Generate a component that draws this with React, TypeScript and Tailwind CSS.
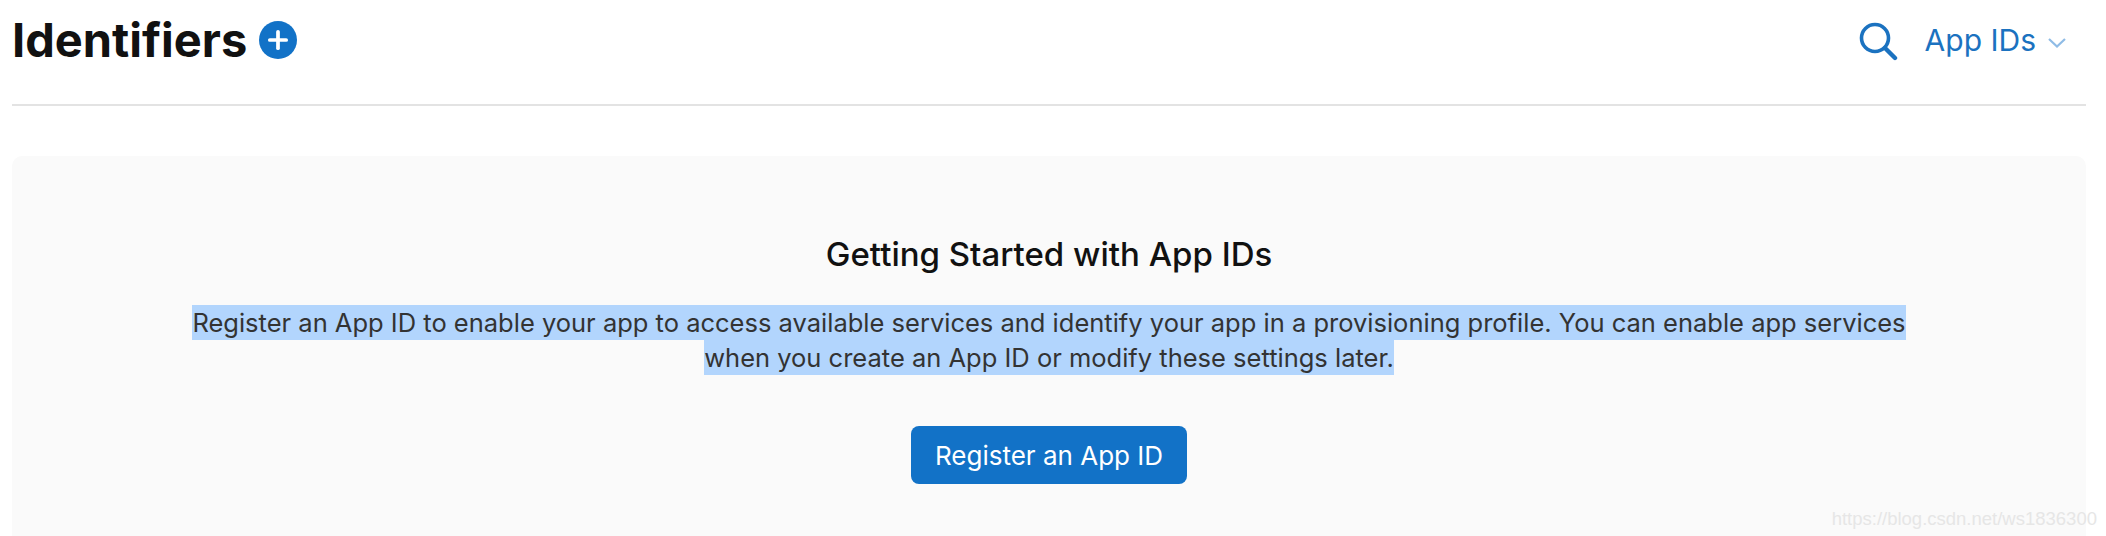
import React from 'react';
import { Plus } from 'lucide-react';

const font = "font-['Inter',sans-serif]";

export default function App() {
  return (
    <div className={`${font} relative h-[536px] w-[2106px] overflow-hidden bg-white pr-5 pl-3`}>
      <div className="flex h-[106px] items-start justify-between border-b-2 border-[#e3e3e3]">
        <div className="flex items-center gap-3 pt-[11px]">
          <h1 className="text-[47px] leading-[57px] font-bold text-[#111111]">Identifiers</h1>
          <button className="flex h-[38px] w-[38px] items-center justify-center rounded-full bg-[#1272c7]">
            <Plus className="h-7 w-7 text-white" strokeWidth={3.2} />
          </button>
        </div>
        <div className="flex items-center pt-[21px] pr-[20px]">
          <svg width="40" height="40" viewBox="0 0 40 40" fill="none" className="text-[#1b72c0]">
            <circle cx="17" cy="17" r="13.5" stroke="currentColor" strokeWidth="3.6" />
            <path d="M27 27L37 37" stroke="currentColor" strokeWidth="4.4" strokeLinecap="round" />
          </svg>
          <span className="mb-[2px] ml-[27px] text-[30px] leading-[38px] text-[#1b72c0]">App IDs</span>
          <svg width="18" height="10" viewBox="0 0 18 10" fill="none" className="mt-[3px] ml-3 text-[#8fbce6]">
            <path d="M1 1L9 8.5L17 1" stroke="currentColor" strokeWidth="2.2" />
          </svg>
        </div>
      </div>
      <div className="mt-[50px] flex h-[400px] flex-col items-center rounded-t-[10px] bg-[#fafafa] pt-[78px]">
        <h2 className="text-[33px] leading-[40px] font-medium text-[#111111]">Getting Started with App IDs</h2>
        <p className="mt-[31px] w-[1740px] text-center text-[25.5px] leading-[35px] text-[#333333]">
          <span className="bg-[#b2d5fd] py-[2px]">
            Register an App ID to enable your app to access available services and identify your app in a provisioning profile. You can enable app services when you create an App ID or modify these settings later.
          </span>
        </p>
        <button className="mt-[51px] h-[58px] w-[276px] rounded-[8px] bg-[#1272c7] text-[26px] text-white">Register an App ID</button>
      </div>
      <div className="absolute top-[508px] right-[9px] font-['Liberation_Sans',sans-serif] text-[18.5px] leading-[22px] text-[#e6e6e6]">https://blog.csdn.net/ws1836300</div>
    </div>
  );
}
